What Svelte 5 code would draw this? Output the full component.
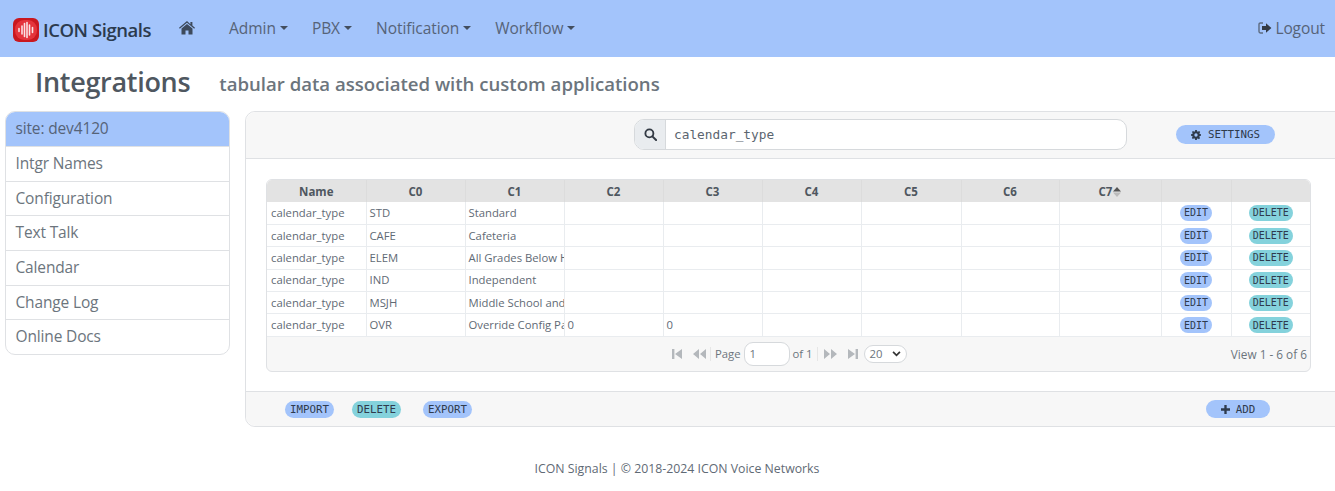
<script lang="ts">
const menus = ['Admin', 'PBX', 'Notification', 'Workflow'];
const sideItems = ['Intgr Names', 'Configuration', 'Text Talk', 'Calendar', 'Change Log', 'Online Docs'];
const columns = ['Name', 'C0', 'C1', 'C2', 'C3', 'C4', 'C5', 'C6', 'C7', '', ''];
const widths = [99, 99, 99, 99, 99, 99, 100, 98, 102, 70, 79];
const rows = [
  ['STD', 'Standard', '', ''],
  ['CAFE', 'Cafeteria', '', ''],
  ['ELEM', 'All Grades Below High School', '', ''],
  ['IND', 'Independent', '', ''],
  ['MSJH', 'Middle School and Junior High', '', ''],
  ['OVR', 'Override Config Parameters', '0', '0']
];
</script>

<nav class="navbar">
  <div class="brand">
    <svg class="logo" viewBox="0 0 26 24" width="26" height="24">
      <rect x="0" y="0" width="26" height="24" rx="6" fill="#c9181f" />
      <rect x="2" y="2" width="22" height="20" rx="9" fill="#e4343b" />
      <g stroke="#fbe3e4" stroke-width="1.6" stroke-linecap="round">
        <path d="M6 10.500v3M9 8v8M11.500 5.500v13M14 4.500v15M16.500 7v10M19.500 9.500v5" />
      </g>
    </svg>
    <span>ICON Signals</span>
  </div>
  <svg class="home" viewBox="0 0 16 14" width="16" height="14">
    <path fill="#3d4a5c" d="M8 0 0 6.700l.8 1L8 1.800l7.200 5.900.8-1-2.600-2.200V1h-2v2.200z" />
    <path fill="#3d4a5c" d="M8 3 2.500 7.600V13.400h4V9.600h3v3.800h4V7.600z" />
  </svg>
  <ul class="menu">
    {#each menus as m}
      <li>{m}<span class="caret"></span></li>
    {/each}
  </ul>
  <div class="logout">
    <svg viewBox="0 0 14 12" width="14" height="12">
      <path fill="none" stroke="#5d6b80" stroke-width="1.400" d="M5 1H2.400Q1 1 1 2.400v7.200Q1 11 2.400 11H5" />
      <path fill="#333a44" d="M4 4h4V1.200L13.400 6 8 10.800V8H4z" />
    </svg>
    Logout
  </div>
</nav>

<header class="title">
  <h1>Integrations</h1>
  <h2>tabular data associated with custom applications</h2>
</header>

<div class="content">
  <aside class="side">
    <div class="item active">site: dev4120</div>
    {#each sideItems as s}
      <div class="item">{s}</div>
    {/each}
  </aside>

  <section class="card">
    <div class="card-head">
      <div class="search">
        <span class="search-icon">
          <svg viewBox="0 0 14 14" width="13" height="13">
            <circle cx="5.800" cy="5.800" r="4.300" fill="none" stroke="#333a44" stroke-width="2" />
            <path d="M9 9l4 4" stroke="#333a44" stroke-width="2.200" stroke-linecap="round" />
          </svg>
        </span>
        <span class="search-value">calendar_type</span>
      </div>
      <button class="pill blue settings">
        <svg viewBox="0 0 12 12" width="10" height="10">
          <path fill="#2f3b4d" fill-rule="evenodd" d="M5 0h2l.3 1.600 1 .4L9.700 1.100l1.300 1.300-.9 1.400.4 1 1.500.2v2l-1.600.3-.4 1 .9 1.400-1.300 1.300-1.400-.9-1 .4L7 12H5l-.3-1.600-1-.4-1.400.9L1 9.600l.9-1.400-.4-1L0 7V5l1.600-.3.4-1-.9-1.300L2.400 1.100l1.400.9 1-.4zM6 4a2 2 0 1 0 0 4 2 2 0 0 0 0-4z" />
        </svg>
        SETTINGS
      </button>
    </div>

    <div class="card-body">
      <div class="grid">
        <table>
          <colgroup>
            {#each widths as w}
              <col style="width: {w}px" />
            {/each}
          </colgroup>
          <thead>
            <tr>
              {#each columns as c}
                <th>
                  {c}{#if c === 'C7'}<svg class="sort" viewBox="0 0 8 10" width="8" height="10">
                      <path fill="#555" d="M4 0 8 4.400H0z" />
                      <path fill="#bbb" d="M0 5.600h8L4 10z" />
                    </svg>{/if}
                </th>
              {/each}
            </tr>
          </thead>
          <tbody>
            {#each rows as r}
              <tr>
                <td>calendar_type</td>
                <td>{r[0]}</td>
                <td>{r[1]}</td>
                <td>{r[2]}</td>
                <td>{r[3]}</td>
                <td></td>
                <td></td>
                <td></td>
                <td></td>
                <td class="act"><button class="pill blue mini">EDIT</button></td>
                <td class="act"><button class="pill teal mini">DELETE</button></td>
              </tr>
            {/each}
          </tbody>
        </table>
        <div class="pager">
          <div class="pager-mid">
            <svg class="pg first" viewBox="0 0 10 10" width="10" height="10"><path d="M0 0h2.400v10H0zM10 0v10L3 5z" /></svg>
            <svg class="pg prev" viewBox="0 0 13 10" width="13" height="10"><path d="M6 0v10L0 5zM13 0v10L7 5z" /></svg>
            <span class="sep"></span>
            <span>Page</span>
            <span class="page-input">1</span>
            <span>of 1</span>
            <span class="sep"></span>
            <svg class="pg next" viewBox="0 0 13 10" width="13" height="10"><path d="M0 0v10l6-5zM7 0v10l6-5z" /></svg>
            <svg class="pg last" viewBox="0 0 10 10" width="10" height="10"><path d="M0 0v10l7-5zM7.600 0H10v10H7.600z" /></svg>
            <span class="page-size">20
              <svg viewBox="0 0 10 7" width="9" height="6"><path d="M1 1l4 4 4-4" fill="none" stroke="#333" stroke-width="2" /></svg>
            </span>
          </div>
          <span class="view">View 1 - 6 of 6</span>
        </div>
      </div>
    </div>

    <div class="card-foot">
      <div class="foot-left">
        <button class="pill blue">IMPORT</button>
        <button class="pill teal">DELETE</button>
        <button class="pill blue export">EXPORT</button>
      </div>
      <button class="pill blue add">
        <svg viewBox="0 0 10 10" width="9" height="9"><path d="M3.700 0h2.600v3.700H10v2.600H6.300V10H3.700V6.300H0V3.700h3.700z" fill="#2f3b4d" /></svg>
        ADD
      </button>
    </div>
  </section>
</div>

<footer>ICON Signals | © 2018-2024 ICON Voice Networks</footer>

<style>
:global(body) {
  font-family: "Open Sans", "Noto Sans", sans-serif;
  background: #fff;
  color: #6c757d;
  overflow-x: hidden;
}
.navbar {
  height: 57px;
  background: #a3c4fb;
  display: flex;
  align-items: center;
  padding: 0 10px 0 13px;
  box-sizing: border-box;
}
.brand {
  display: flex;
  align-items: center;
  gap: 4px;
  color: #2b3a4d;
  font-size: 18.500px;
  font-weight: 600;
  letter-spacing: -0.45px;
  margin-top: 2px;
}
.logo {
  flex: none;
}
.home {
  margin: -2px 0 0 28px;
}
.menu {
  list-style: none;
  display: flex;
  gap: 24px;
  margin: -2px 0 0 34px;
  padding: 0;
  font-size: 15.500px;
  letter-spacing: -0.05px;
  color: #566378;
}
.menu li {
  display: flex;
  align-items: center;
}
.caret {
  width: 0;
  height: 0;
  margin-left: 4px;
  border: 4px solid transparent;
  border-top-color: #434e5f;
  border-bottom: 0;
}
.logout {
  margin: -2px 0 0 auto;
  display: flex;
  align-items: center;
  gap: 3px;
  font-size: 15.500px;
  letter-spacing: -0.1px;
  color: #566378;
}
.title {
  height: 54px;
  display: flex;
  align-items: center;
  padding: 0 0 5px 35px;
  box-sizing: border-box;
  gap: 29px;
}
.title h1 {
  margin: 0;
  font-size: 27px;
  font-weight: 600;
  letter-spacing: -0.3px;
  color: #4f5760;
}
.title h2 {
  margin: 4px 0 0;
  font-size: 18.600px;
  font-weight: 600;
  color: #6c757d;
}
.content {
  display: flex;
  align-items: flex-start;
  padding-left: 5px;
  gap: 15px;
}
.side {
  width: 225px;
  flex: none;
  border: 1px solid #dfe1e4;
  border-radius: 10px;
  box-sizing: border-box;
  overflow: hidden;
}
.item {
  height: 34.700px;
  line-height: 33px;
  box-sizing: border-box;
  padding-left: 9.500px;
  font-size: 15.500px;
  letter-spacing: -0.15px;
  border-top: 1px solid #dfe1e4;
}
.item.active {
  background: #a3c4fb;
  color: #566378;
  border-top: 0;
  height: 34px;
}
.card {
  flex: 1;
  height: 316px;
  margin-right: -10px;
  border: 1px solid #dfe1e4;
  border-radius: 10px;
  box-sizing: border-box;
  display: flex;
  flex-direction: column;
}
.card-head {
  height: 47px;
  background: #f7f7f7;
  border-bottom: 1px solid #dfe1e4;
  border-radius: 10px 0 0 0;
  display: flex;
  align-items: center;
  padding: 0 0 1px 388px;
  box-sizing: border-box;
  flex: none;
}
.search {
  width: 493px;
  height: 31px;
  border: 1px solid #d6d9dc;
  border-radius: 10px;
  box-sizing: border-box;
  display: flex;
  background: #fff;
  overflow: hidden;
}
.search-icon {
  width: 30px;
  background: #e9ecef;
  border-right: 1px solid #d6d9dc;
  display: flex;
  align-items: center;
  justify-content: center;
}
.search-value {
  font-family: "DejaVu Sans Mono", monospace;
  font-size: 12.800px;
  line-height: 29px;
  padding-left: 8px;
  color: #5b6570;
}
.pill {
  font-family: "DejaVu Sans Mono", monospace;
  font-size: 10.800px;
  font-weight: 400;
  border: 0;
  border-radius: 9px;
  color: #2f3b4d;
  padding: 0;
  height: 18px;
  display: inline-flex;
  align-items: center;
  justify-content: center;
}
.blue {
  background: #a3c4fb;
}
.teal {
  background: #84d2dc;
}
.settings {
  width: 99px;
  height: 19px;
  margin-left: 49px;
  gap: 7px;
  border-radius: 10px;
}
.card-body {
  flex: 1;
  padding: 20px 24px 0 20px;
}
.grid {
  width: 1045px;
  border: 1px solid #dfe1e4;
  border-radius: 6px;
  box-sizing: border-box;
  overflow: hidden;
  background: #f7f7f7;
}
table {
  border-collapse: collapse;
  table-layout: fixed;
  width: 100%;
  background: #fff;
}
th {
  height: 22px;
  padding: 0;
  background: #e3e3e3;
  border-left: 1px solid #dcdcdc;
  font-size: 11.500px;
  font-weight: 700;
  color: #4f5760;
  text-align: center;
}
th:first-child,
td:first-child {
  border-left: 0;
}
.sort {
  vertical-align: -1px;
  margin-left: 1px;
}
td {
  height: 22.400px;
  padding: 0 3px 1px;
  border-left: 1px solid #e9ecef;
  border-bottom: 1px solid #e9ecef;
  font-size: 11.300px;
  color: #5f6a75;
  white-space: nowrap;
  overflow: hidden;
  box-sizing: border-box;
}
td:first-child {
  padding-left: 4px;
}
.act {
  text-align: center;
}
.mini {
  font-size: 10px;
  height: 16px;
  border-radius: 8px;
  padding: 0 4px;
  vertical-align: middle;
}
.pager {
  height: 34px;
  display: flex;
  align-items: center;
  box-sizing: border-box;
  font-size: 11.300px;
}
.pager-mid {
  display: flex;
  align-items: center;
  margin-left: 405px;
}
.pg {
  fill: #b4b8bc;
}
.prev {
  margin-left: 11px;
}
.sep {
  width: 1px;
  height: 14px;
  background: #e6e6e6;
  margin: 0 4px;
}
.page-input {
  width: 46px;
  height: 24px;
  line-height: 22px;
  border: 1px solid #d6d9dc;
  border-radius: 9px;
  background: #fff;
  box-sizing: border-box;
  padding-left: 5px;
  margin: 0 3px;
}
.next {
  margin-left: 2px;
}
.last {
  margin-left: 11px;
}
.page-size {
  margin-left: 6px;
  width: 43px;
  height: 18px;
  border: 1px solid #d6d9dc;
  border-radius: 9px;
  background: #fff;
  box-sizing: border-box;
  display: flex;
  align-items: center;
  justify-content: space-between;
  padding: 0 5px;
}
.view {
  margin-left: auto;
  padding-right: 3px;
  font-size: 11.800px;
}
.card-foot {
  height: 35px;
  flex: none;
  background: #f7f7f7;
  border-top: 1px solid #dfe1e4;
  border-radius: 0 0 0 10px;
  box-sizing: border-box;
  display: flex;
  align-items: center;
  padding-left: 39px;
}
.foot-left {
  display: flex;
  gap: 18px;
}
.foot-left .pill {
  width: 49px;
  height: 17px;
}
.foot-left .export {
  margin-left: 4px;
}
.add {
  width: 64px;
  margin-left: 734px;
  gap: 6px;
}
footer {
  margin-top: 33px;
  text-align: center;
  font-size: 12.300px;
  color: #5f6a75;
  padding-left: 19px;
}
</style>
